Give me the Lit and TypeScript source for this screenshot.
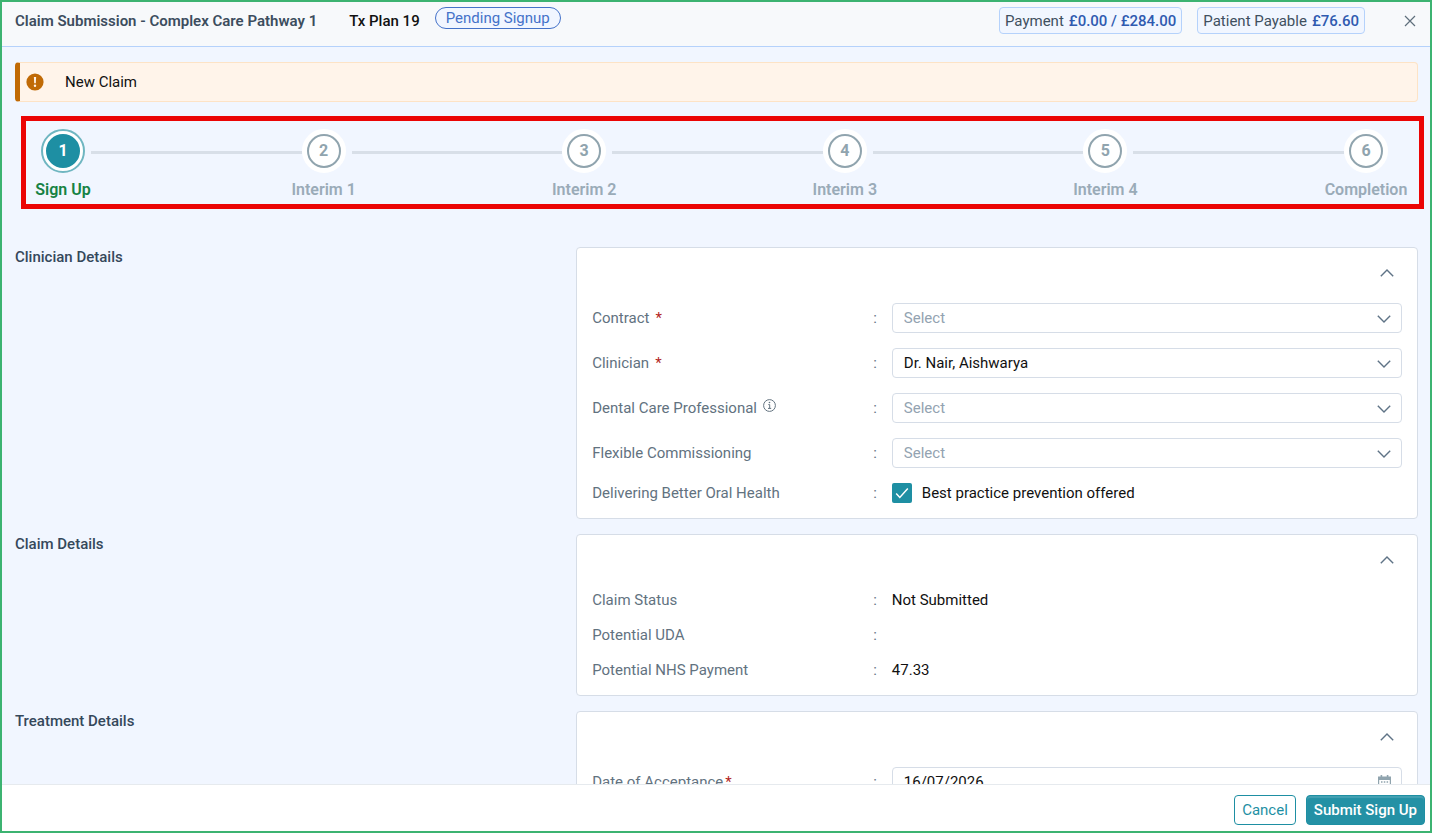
import { LitElement, html, css, svg, nothing } from "lit";
import { customElement, property, state } from "lit/decorators.js";
import { classMap } from "lit/directives/class-map.js";

const chevron = (cls: string, d: string) => html`
  <svg class=${cls} viewBox="0 0 14 8" width="14" height="8" fill="none" stroke="#5f7386" stroke-width="1.4" aria-hidden="true">
    ${svg`<path d=${d} />`}
  </svg>`;
const DOWN = "M.8 .8 7 7 13.2 .8";
const UP = "M.8 7.2 7 1 13.2 7.2";

@customElement("claim-stepper")
class ClaimStepper extends LitElement {
  @property({ type: Array }) steps: string[] = [];
  @property({ type: Number }) current = 1;

  static styles = css`
    :host { display: block; }
    .steps {
      display: flex;
      margin: 0;
      padding: 8px 31px 4px 15px;
      list-style: none;
      border: 5px solid #eb0505;
    }
    .step {
      display: flex;
      flex-direction: column;
      align-items: center;
      gap: 7px;
      width: 44px;
      flex: none;
    }
    .ring {
      box-sizing: border-box;
      width: 44px;
      height: 44px;
      padding: 3px;
      border: 2px solid #fff;
      border-radius: 50%;
      background: #fff;
    }
    .dot {
      box-sizing: border-box;
      display: grid;
      place-items: center;
      width: 34px;
      height: 34px;
      border: 2px solid #90a4ae;
      border-radius: 50%;
      color: #90a4ae;
      font-size: 16px;
      font-weight: 700;
    }
    .label {
      white-space: nowrap;
      line-height: 20px;
      font-size: 16px;
      font-weight: 600;
      color: #9aabb8;
    }
    .active .ring { border-color: #6fb6c1; }
    .active .dot { background: #1e8fa3; border-color: #1e8fa3; color: #fff; }
    .active .label { color: #168244; }
    .line {
      flex: 1;
      height: 3px;
      margin: 22px 0 0 6px;
      background: #d8dfe8;
    }
  `;

  render() {
    return html`<ol class="steps">
      ${this.steps.map((name, i) => html`
        ${i ? html`<li class="line" role="presentation"></li>` : nothing}
        <li class=${classMap({ step: true, active: i + 1 === this.current })}>
          <span class="ring"><span class="dot">${i + 1}</span></span>
          <span class="label">${name}</span>
        </li>`)}
    </ol>`;
  }
}

@customElement("detail-section")
class DetailSection extends LitElement {
  @property() heading = "";
  @state() private open = true;

  static styles = css`
    :host { display: grid; grid-template-columns: 2fr 3fr; }
    h2 { margin: 0; font-size: 15px; line-height: 20px; font-weight: 500; color: #35485b; }
    .card {
      padding: 15px;
      border: 1px solid #d6dde7;
      border-radius: 4px;
      background: #fff;
    }
    .bar { display: flex; justify-content: flex-end; height: 40px; }
    .toggle {
      display: grid;
      place-items: center;
      width: 30px;
      height: 20px;
      padding: 0;
      border: 0;
      background: none;
      cursor: pointer;
    }
    .rows { display: grid; gap: 15px; }
  `;

  render() {
    return html`
      <h2>${this.heading}</h2>
      <div class="card">
        <div class="bar">
          <button class="toggle" aria-label="Toggle ${this.heading}" aria-expanded=${this.open} @click=${() => (this.open = !this.open)}>
            ${chevron("icon", this.open ? UP : DOWN)}
          </button>
        </div>
        ${this.open ? html`<div class="rows"><slot></slot></div>` : nothing}
      </div>`;
  }
}

@customElement("app-root")
class AppRoot extends LitElement {
  static styles = css`
    :host {
      display: block;
      font-family: Roboto, "Liberation Sans", sans-serif;
      font-size: 15px;
      line-height: 20px;
      color: #111;
    }
    .dialog {
      box-sizing: border-box;
      display: flex;
      flex-direction: column;
      height: 100vh;
      border: 2px solid #3cb371;
      background: #f1f6ff;
    }
    .header {
      display: flex;
      align-items: center;
      padding: 5px 13px 12px;
      border-bottom: 1px solid #b5d2fb;
      background: #f7f9fb;
    }
    h1 { margin: 0 32px 0 0; font-size: 15px; line-height: 20px; font-weight: 600; color: #3c4d5e; }
    .plan { font-weight: 500; margin-right: 15px; }
    .status {
      align-self: flex-start;
      padding: 0 10px;
      border: 1px solid #4472c9;
      border-radius: 11px;
      background: #f1f6ff;
      color: #4472c9;
    }
    .totals { display: flex; gap: 15px; margin: 0 38px 0 auto; }
    .total {
      display: flex;
      gap: 5px;
      padding: 3px 5px 2px;
      border: 1px solid #b5d2fb;
      border-radius: 4px;
      background: #f1f6ff;
      color: #3f5060;
      white-space: nowrap;
    }
    .total b { font-weight: 500; color: #2f5ab0; }
    .close { display: grid; place-items: center; width: 14px; height: 20px; padding: 0; border: 0; background: none; cursor: pointer; }
    .body {
      flex: 1;
      min-height: 0;
      overflow-y: auto;
      scrollbar-width: none;
      padding: 15px 12px 15px 13px;
    }
    .alert {
      display: flex;
      align-items: center;
      gap: 21px;
      padding: 9px 6px;
      border: 1px solid #fde3c6;
      border-left: 5px solid #c06a06;
      border-radius: 4px;
      background: #fff4ea;
    }
    .alert svg { flex: none; }
    .track { margin: 14px -6px 38px 6px; }
    .sections { display: grid; gap: 15px; }
    .row { display: grid; grid-template-columns: 37% 63%; align-items: center; min-height: 20px; }
    .name { display: flex; padding-right: 15px; color: #62727f; }
    .name::after { content: ":"; margin-left: auto; }
    .req { margin-left: 6px; color: #b3261e; }
    .req.tight { margin-left: 2px; }
    .info { margin-left: 6px; margin-top: 1px; }
    .control { position: relative; display: block; }
    .field {
      box-sizing: border-box;
      display: block;
      width: 100%;
      height: 30px;
      margin: 0;
      padding: 0 40px 0 11px;
      border: 1px solid #d6dde7;
      border-radius: 4px;
      background: #fff;
      color: #111;
      font: inherit;
      appearance: none;
    }
    .field.empty { color: #93a3b1; }
    .mark { position: absolute; right: 11px; top: 12px; pointer-events: none; }
    .mark.cal { top: 8px; }
    .check { display: flex; align-items: center; gap: 10px; }
    .tick {
      appearance: none;
      width: 20px;
      height: 20px;
      margin: 0;
      border-radius: 2px;
      background: #1e8fa3;
      display: grid;
      grid-area: 1 / 1;
    }
    .box { display: grid; place-items: center; }
    .box svg { grid-area: 1 / 1; pointer-events: none; }
    .footer {
      display: flex;
      justify-content: flex-end;
      gap: 10px;
      padding: 10px 5px 6px;
      border-top: 1px solid #e6eaee;
      background: #fff;
    }
    .btn {
      box-sizing: border-box;
      height: 30px;
      padding: 0 7px;
      border: 1px solid #1e8fa3;
      border-radius: 4px;
      background: #fff;
      color: #1e8fa3;
      font: inherit;
      cursor: pointer;
    }
    .btn.primary {
      background: #2491a5;
      color: #fff;
      font-weight: 500;
      box-shadow: inset 0 2px 1px rgba(255, 255, 255, 0.15);
    }
  `;

  private selectRow(id: string, label: string, value = "", required = false, info = false) {
    return html`<div class="row">
      <label class="name" for=${id}>${label}
        ${required ? html`<span class="req">*</span>` : nothing}
        ${info ? html`<svg class="info" width="13" height="13" viewBox="0 0 13 13" fill="none" stroke="#62727f" aria-hidden="true">
          <circle cx="6.5" cy="6.5" r="5.9" /><path d="M5.3 5.6h1.4v3.6M5 9.4h3.2" /><circle cx="6.5" cy="3.5" r=".8" fill="#62727f" stroke="none" />
        </svg>` : nothing}
      </label>
      <span class="control">
        <select id=${id} class=${classMap({ field: true, empty: !value })}><option>${value || "Select"}</option></select>
        ${chevron("mark", DOWN)}
      </span>
    </div>`;
  }

  private textRow(label: string, value: string) {
    return html`<div class="row"><span class="name">${label}</span><span>${value}</span></div>`;
  }

  render() {
    return html`<div class="dialog">
      <header class="header">
        <h1>Claim Submission - Complex Care Pathway 1</h1>
        <span class="plan">Tx Plan 19</span>
        <span class="status">Pending Signup</span>
        <div class="totals">
          <span class="total">Payment <b>£0.00 / £284.00</b></span>
          <span class="total">Patient Payable <b>£76.60</b></span>
        </div>
        <button class="close" aria-label="Close">
          <svg width="12" height="12" viewBox="0 0 12 12" stroke="#5f6f7c" stroke-width="1.2"><path d="M1 1 11 11M11 1 1 11" /></svg>
        </button>
      </header>

      <main class="body">
        <div class="alert" role="status">
          <svg width="18" height="18" viewBox="0 0 18 18" aria-hidden="true">
            <circle cx="9" cy="9" r="8.6" fill="#c06a06" />
            <path d="M7.9 4h2.2l-.3 6.2H8.2z" fill="#fff4ea" /><circle cx="9" cy="12.7" r="1.2" fill="#fff4ea" />
          </svg>
          <span>New Claim</span>
        </div>

        <claim-stepper class="track" .steps=${["Sign Up", "Interim 1", "Interim 2", "Interim 3", "Interim 4", "Completion"]} .current=${1}></claim-stepper>

        <div class="sections">
          <detail-section heading="Clinician Details">
            ${this.selectRow("contract", "Contract", "", true)}
            ${this.selectRow("clinician", "Clinician", "Dr. Nair, Aishwarya", true)}
            ${this.selectRow("dcp", "Dental Care Professional", "", false, true)}
            ${this.selectRow("flexible", "Flexible Commissioning")}
            <div class="row">
              <span class="name">Delivering Better Oral Health</span>
              <label class="check">
                <span class="box">
                  <input class="tick" type="checkbox" checked />
                  <svg width="14" height="12" viewBox="0 0 14 12" fill="none" stroke="#fff" stroke-width="1.5"><path d="M1.2 6.6 4.8 10.4 12.8 1.6" /></svg>
                </span>
                Best practice prevention offered
              </label>
            </div>
          </detail-section>

          <detail-section heading="Claim Details">
            ${this.textRow("Claim Status", "Not Submitted")}
            ${this.textRow("Potential UDA", "")}
            ${this.textRow("Potential NHS Payment", "47.33")}
          </detail-section>

          <detail-section heading="Treatment Details">
            <div class="row">
              <label class="name" for="accepted">Date of Acceptance<span class="req tight">*</span></label>
              <span class="control">
                <input id="accepted" class="field" type="text" value="16/07/2026" />
                <svg class="mark cal" width="13" height="14" viewBox="0 0 13 14" aria-hidden="true">
                  <path d="M2.6 0h1.6v1.4h4.6V0h1.6v1.4H13V5H0V1.4h2.6z" fill="#90a4ae" />
                  <path d="M.6 4v9.4h11.8V4" fill="none" stroke="#90a4ae" stroke-width="1.2" />
                  <path d="M3 7h1.5M5.8 7h1.5M8.6 7h1.5M3 10h1.5M5.8 10h1.5M8.6 10h1.5" stroke="#90a4ae" stroke-width="1.5" />
                </svg>
              </span>
            </div>
          </detail-section>
        </div>
      </main>

      <footer class="footer">
        <button class="btn">Cancel</button>
        <button class="btn primary">Submit Sign Up</button>
      </footer>
    </div>`;
  }
}
